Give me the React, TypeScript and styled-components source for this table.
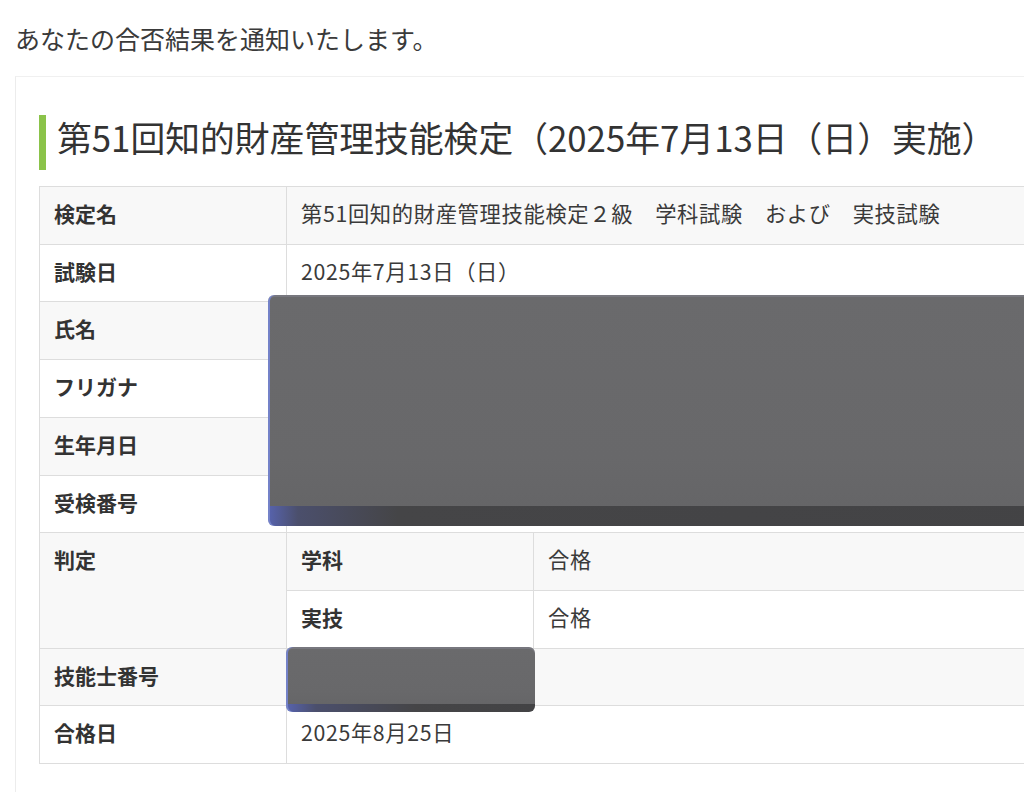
import styled, { createGlobalStyle } from 'styled-components'

const GlobalStyle = createGlobalStyle`
  html, body {
    margin: 0;
    padding: 0;
    background: #ffffff;
    overflow: hidden;
  }
  body {
    font-family: 'Noto Sans CJK JP', 'Noto Sans', sans-serif;
    color: #333333;
  }
`

type Row = {
  label: string
  value?: string
  striped: boolean
}

const topRows: Row[] = [
  { label: '検定名', value: '第51回知的財産管理技能検定２級　学科試験　および　実技試験', striped: true },
  { label: '試験日', value: '2025年7月13日（日）', striped: false },
  { label: '氏名', value: '', striped: true },
  { label: 'フリガナ', value: '', striped: false },
  { label: '生年月日', value: '', striped: true },
  { label: '受検番号', value: '', striped: false },
]

export default function App() {
  return (
    <Page>
      <GlobalStyle />
      <Intro>あなたの合否結果を通知いたします。</Intro>
      <Card>
        <Heading>第51回知的財産管理技能検定（2025年7月13日（日）実施）</Heading>
        <TableWrap>
          <ResultTable>
            <colgroup>
              <col style={{ width: 247 }} />
              <col style={{ width: 247 }} />
              <col />
            </colgroup>
            <tbody>
              {topRows.map((row) => (
                <tr key={row.label}>
                  <LabelCell $striped={row.striped}>{row.label}</LabelCell>
                  <ValueCell $striped={row.striped} colSpan={2}>
                    {row.value}
                  </ValueCell>
                </tr>
              ))}
              <tr>
                <LabelCell $striped rowSpan={2}>
                  判定
                </LabelCell>
                <LabelCell $striped>学科</LabelCell>
                <ValueCell $striped>合格</ValueCell>
              </tr>
              <tr>
                <LabelCell $striped={false}>実技</LabelCell>
                <ValueCell $striped={false}>合格</ValueCell>
              </tr>
              <tr>
                <LabelCell $striped>技能士番号</LabelCell>
                <ValueCell $striped colSpan={2} />
              </tr>
              <tr>
                <LabelCell $striped={false}>合格日</LabelCell>
                <ValueCell $striped={false} colSpan={2}>
                  2025年8月25日
                </ValueCell>
              </tr>
            </tbody>
          </ResultTable>
          <Redaction $left={229} $top={109} $width={820} $height={231} $edge={20} />
          <Redaction $left={247} $top={461} $width={249} $height={65} $edge={8} />
        </TableWrap>
      </Card>
    </Page>
  )
}

const Page = styled.div`
  padding: 20px 0 0 15px;
  width: 1200px;
`

const Intro = styled.p`
  margin: 0;
  font-size: 25px;
  line-height: 36px;
  color: #3a3a3a;
`

const Card = styled.section`
  margin-top: 20px;
  padding: 38px 0 40px 23px;
  border-top: 1px solid #f0f0f0;
  border-left: 1px solid #ececec;
  background: #ffffff;
  min-height: 700px;
`

const Heading = styled.h2`
  margin: 0 0 16px;
  padding: 0 0 10px 11px;
  border-left: 7px solid #8bc34a;
  font-size: 34.8px;
  font-weight: 400;
  line-height: 45px;
  color: #333333;
  white-space: nowrap;
`

const TableWrap = styled.div`
  position: relative;
  width: 1120px;
`

const ResultTable = styled.table`
  width: 100%;
  table-layout: fixed;
  border-collapse: collapse;
  font-size: 21px;
`

const Cell = styled.td<{ $striped: boolean }>`
  padding: 15px 14px 19px;
  line-height: 22.7px;
  vertical-align: top;
  border: 1px solid #dddddd;
  background: ${(p) => (p.$striped ? '#f8f8f8' : '#ffffff')};
  white-space: nowrap;
`

const LabelCell = styled(Cell)`
  font-weight: 700;
  color: #333333;
`

const ValueCell = styled(Cell)`
  font-size: 21.3px;
  font-weight: 400;
  color: #3a3a3a;
  letter-spacing: 0.65px;
`

// a blacked-out block pasted over the private fields
const Redaction = styled.div<{
  $left: number
  $top: number
  $width: number
  $height: number
  $edge: number
}>`
  position: absolute;
  left: ${(p) => p.$left}px;
  top: ${(p) => p.$top}px;
  width: ${(p) => p.$width}px;
  height: ${(p) => p.$height}px;
  border-radius: 6px;
  background:
    linear-gradient(
      to right,
      #5763ae 0px,
      #4b4f6c 30px,
      #454547 130px,
      #434345 100%
    ) bottom / 100% ${(p) => p.$edge}px no-repeat,
    linear-gradient(to bottom, #6a6a6c, #68686a 70%, #646466);
  box-shadow: inset 2px 0 0 #7482c8, inset 0 2px 0 #77777e;
`
